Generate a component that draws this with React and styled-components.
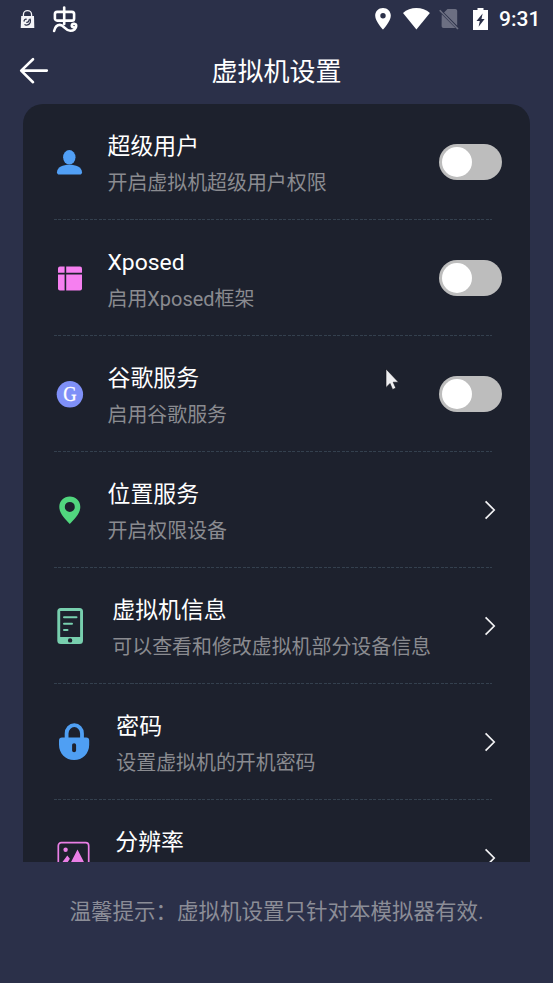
import React from 'react';
import styled, { createGlobalStyle } from 'styled-components';

const settings = [
  { icon: 'user', title: '超级用户', desc: '开启虚拟机超级用户权限', gap: 13.5, toggle: true },
  { icon: 'frame', title: 'Xposed', desc: '启用Xposed框架', gap: 13.5, toggle: true },
  { icon: 'google', title: '谷歌服务', desc: '启用谷歌服务', gap: 13.5, toggle: true },
  { icon: 'pin', title: '位置服务', desc: '开启权限设备', gap: 13.5 },
  { icon: 'phone', title: '虚拟机信息', desc: '可以查看和修改虚拟机部分设备信息', gap: 18.3 },
  { icon: 'lock', title: '密码', desc: '设置虚拟机的开机密码', gap: 22.3 },
  { icon: 'image', title: '分辨率', gap: 21.3 },
];

const icons = {
  user: (
    <g fill="#519ff5">
      <ellipse cx="15.3" cy="19.3" rx="6.2" ry="7.2" />
      <path d="M3 34.2c0-5 6-7.4 12.4-7.4S28 29.2 28 34.2c0 1.5-.9 2.3-2.300 2.300H5.300C3.900 36.500 3 35.700 3 34.200z" />
    </g>
  ),
  frame: (
    <g fill="#f67ff0">
      <path d="M6 12.600h4.600v6.200H4v-4.200a2 2 0 0 1 2-2z" />
      <path d="M12.200 12.600H26a2 2 0 0 1 2 2v4.200H12.200z" />
      <path d="M4 20.400h6.600v16H6a2 2 0 0 1-2-2z" />
      <path d="M12.200 20.400H28v14a2 2 0 0 1-2 2H12.200z" />
    </g>
  ),
  google: (
    <>
      <circle cx="15.900" cy="24.300" r="13.200" fill="#7f90f8" />
      <text transform="translate(15.900 31.300) scale(.88 1)" textAnchor="middle" fill="#fff" stroke="#fff" strokeWidth=".3">
        G
      </text>
    </>
  ),
  pin: (
    <path
      fill="#51d67e"
      fillRule="evenodd"
      d="M15.800 10.600c-5.900 0-10.500 4.600-10.500 10.300 0 7 6.800 13 10.500 17.100 3.700-4.100 10.500-10.100 10.500-17.100 0-5.700-4.600-10.300-10.500-10.300zm0 5.300a5 5 0 1 1 0 10 5 5 0 0 1 0-10z"
    />
  ),
  phone: (
    <>
      <path
        fill="#78cfae"
        fillRule="evenodd"
        d="M6.800 6h18.700a3.500 3.500 0 0 1 3.500 3.500v29a3.500 3.500 0 0 1-3.500 3.500H6.800a3.500 3.500 0 0 1-3.500-3.500v-29A3.500 3.500 0 0 1 6.800 6zm-.6 3v26h19.900V9zm9.900 27.200a2.200 2.200 0 1 0 0 4.400 2.200 2.200 0 0 0 0-4.400z"
      />
      <path stroke="#78cfae" strokeWidth="2" strokeLinecap="round" d="M10 15.300h12.500M10 21.700h8M10 28h3.500" />
    </>
  ),
  lock: (
    <>
      <path d="M12.600 21v-5.500a7.700 8.300 0 0 1 15.400 0V21" fill="none" stroke="#4f9ff3" strokeWidth="3.800" />
      <path
        fill="#4f9ff3"
        fillRule="evenodd"
        d="M8 19.500h24.200c2 0 3 1 3 3v4.200C35.200 35.500 28.600 42 20.100 42S5 35.500 5 26.700v-4.200c0-2 1-3 3-3zm12.100 5.700c-1.200 0-2 .8-2 2v5c0 1.200.8 2 2 2s2-.8 2-2v-5c0-1.200-.8-2-2-2z"
      />
    </>
  ),
  image: (
    <>
      <rect x="4.300" y="8.700" width="30.400" height="30.400" rx="3" fill="none" stroke="#ea7fe6" strokeWidth="1.700" />
      <circle cx="11.600" cy="15.700" r="2.200" fill="#ea7fe6" />
      <path d="M23.500 15.500 32 32H15z M13.300 21.500l2.600 3.200L10 34H7v-4z" fill="#ea7fe6" />
    </>
  ),
};

const StatusBar = () => (
  <StatusWrap>
    <StatusIcon $ml={20} width="15" height="20" viewBox="0 0 15 20">
      <path d="M3.400 8V5.700a4.100 4.100 0 0 1 8.200 0V8" fill="none" stroke="#f4f4f8" strokeWidth="1.300" />
      <path d="M1.200 7h12.800l.3 12H.7z" fill="#f4f4f8" />
      <path
        d="M4.200 12.600c-.6-1.600 1-2.800 2.500-2.200M9.800 9.600c1.600 2 .6 6.200-3 6.600-1.200.1-1.900-.4-2.100-1.100M6.300 13.400c1.500.2 2.700-1 3-3"
        fill="none"
        stroke="#2b3049"
        strokeWidth="1.200"
      />
    </StatusIcon>
    {/* emulator mark */}
    <StatusIcon $ml={16} width="28" height="28" viewBox="0 0 28 28">
      <g fill="none" stroke="#fff" strokeWidth="2.600" strokeLinecap="round" strokeLinejoin="round">
        <path d="M13.200 2.600v16.400" />
        <rect x="3.900" y="6.900" width="19.200" height="8.700" rx="2.200" />
        <path d="M3.100 26c.9-3.700 3-6.100 5.700-6.100 4.300 0 5.300 5.800 10.500 5.800 3.400 0 5.900-2 5.900-4.700 0-2.500-3.800-3-4.400-.8-.3 1.400.7 2.200 1.900 1.800" />
      </g>
    </StatusIcon>
    <Spacer />
    <StatusIcon width="16" height="22" viewBox="0 0 16 22">
      <path
        fill="#fff"
        fillRule="evenodd"
        d="M8 0C3.500 0 .2 3.300.2 7.700.2 13.200 8 21.600 8 21.600s7.800-8.400 7.800-13.900C15.800 3.300 12.500 0 8 0zm0 5a2.700 2.700 0 1 1 0 5.400A2.700 2.700 0 0 1 8 5z"
      />
    </StatusIcon>
    <StatusIcon $ml={12} width="27" height="22" viewBox="0 0 27 22">
      <path fill="#fff" d="M0 4.900C3.600 1.800 8.300.1 13.400.1s9.900 1.700 13.500 4.800L13.400 21.600z" />
    </StatusIcon>
    <StatusIcon $ml={9} width="20" height="22" viewBox="0 0 20 22">
      <path d="M8.500 1h7.700c1.200 0 2 .8 2 2v14.700L5 4.500zM2.700 6.200 16.400 20H4.600c-1.200 0-2-.8-2-2z" fill="#6c6f82" />
      <path d="M.7 2.300 19 21" stroke="#6c6f82" strokeWidth="1.600" />
    </StatusIcon>
    <StatusIcon $ml={14} width="15" height="22" viewBox="0 0 15 22">
      <path
        fill="#fff"
        fillRule="evenodd"
        d="M4.500 0h6v2H15v20H0V2h4.500zM9.600 5.400 3.500 13h3.300l-1.200 5.800 6-7.800H8.500z"
      />
    </StatusIcon>
    <Clock>9:31</Clock>
  </StatusWrap>
);

const SettingRow = ({ item }) => {
  const [on, setOn] = React.useState(false);
  return (
    <Row>
      <RowIcon width="40" height="48" viewBox="0 0 40 48">
        {icons[item.icon]}
      </RowIcon>
      <RowText $gap={item.gap}>
        <Title>{item.title}</Title>
        <Desc>{item.desc}</Desc>
      </RowText>
      {item.toggle ? (
        <Switch $on={on} onClick={() => setOn(!on)}>
          <Knob />
        </Switch>
      ) : (
        <Chevron width="12" height="20" viewBox="0 0 12 20">
          <path d="M1.600 1.300 10.200 10l-8.600 8.700" fill="none" stroke="#f2f2f4" strokeWidth="1.700" />
        </Chevron>
      )}
    </Row>
  );
};

const App = () => {
  return (
    <>
      <GlobalStyle />
      <Screen>
        <StatusBar />
        <Header>
          <BackButton>
            <svg width="30" height="28" viewBox="0 0 30 28">
              <path
                d="M14 2.200 2.200 13.600 14 25.200M2.500 13.600h25.300"
                fill="none"
                stroke="#fff"
                strokeWidth="2.600"
                strokeLinecap="round"
                strokeLinejoin="round"
              />
            </svg>
          </BackButton>
          <HeaderTitle>虚拟机设置</HeaderTitle>
        </Header>
        <Card>
          {settings.map((item) => (
            <SettingRow key={item.icon} item={item} />
          ))}
        </Card>
        <Tip>温馨提示：虚拟机设置只针对本模拟器有效.</Tip>
        <Cursor width="14" height="23" viewBox="0 0 14 23">
          <path
            d="M1 1v18.500l4-4 2.600 6 3.200-1.400L8.200 14.200h5.300z"
            fill="#eeeef0"
            stroke="#10131b"
            strokeWidth=".6"
          />
        </Cursor>
      </Screen>
    </>
  );
};

export default App;

const GlobalStyle = createGlobalStyle`
  * {
    box-sizing: border-box;
  }

  body {
    margin: 0;
    background: #2b3049;
    font-family: Roboto, 'Noto Sans CJK SC', sans-serif;
  }
`;

const Screen = styled.div`
  position: relative;
  display: flex;
  flex-direction: column;
  width: 553px;
  height: 983px;
  overflow: hidden;
  background: #2b3049;
`;

const StatusWrap = styled.div`
  display: flex;
  align-items: center;
  flex: none;
  height: 37px;
  padding-right: 14px;
`;

const StatusIcon = styled.svg`
  flex: none;
  margin-left: ${(props) => props.$ml || 0}px;
`;

const Spacer = styled.div`
  flex: 1;
`;

const Clock = styled.span`
  width: 40px;
  margin-left: 11px;
  padding-top: 1px;
  color: #fff;
  font-size: 21px;
  font-weight: 500;
  line-height: 24px;
  white-space: nowrap;
`;

const Header = styled.header`
  display: grid;
  grid-template-columns: 60px 1fr 60px;
  align-items: center;
  flex: none;
  height: 67px;
`;

const BackButton = styled.button`
  display: flex;
  padding: 0 0 0 19px;
  border: 0;
  background: none;
`;

const HeaderTitle = styled.h1`
  margin: 0;
  padding-top: 2px;
  color: #fff;
  font-size: 26px;
  font-weight: 400;
  line-height: 36px;
  text-align: center;
`;

const Card = styled.main`
  flex: none;
  height: 757.5px;
  margin: 0 23px;
  overflow: hidden;
  border-radius: 20px 20px 0 0;
  background: #1d212d;
`;

const Row = styled.div`
  display: flex;
  align-items: center;
  height: 116px;
  padding: 0 28px 0 31px;
  background: repeating-linear-gradient(90deg, #34404e 0 3px, transparent 3px 4.5px) 31px 115px / 438px 1px no-repeat;
`;

const RowIcon = styled.svg`
  flex: none;

  text {
    font-family: 'Liberation Serif', serif;
    font-size: 21px;
    font-weight: 400;
  }
`;

const RowText = styled.div`
  flex: 1;
  margin-left: ${(props) => props.$gap}px;
  padding-top: 7px;
  white-space: nowrap;
`;

const Title = styled.div`
  color: #fff;
  font-size: 22.9px;
  line-height: 37px;
`;

const Desc = styled.div`
  height: 38px;
  color: #8a8b90;
  font-size: 19.93px;
  line-height: 38px;
`;

const Switch = styled.button`
  display: flex;
  align-items: center;
  justify-content: ${(props) => (props.$on ? 'flex-end' : 'flex-start')};
  width: 63px;
  height: 36px;
  padding: 0 3px;
  border: 0;
  border-radius: 18px;
  background: ${(props) => (props.$on ? '#519ff5' : '#bdbdbd')};
`;

const Knob = styled.span`
  width: 30px;
  height: 30px;
  border-radius: 50%;
  background: #fff;
`;

const Chevron = styled.svg`
  flex: none;
  margin-right: 6px;
`;

const Tip = styled.p`
  margin: 32px 0 0;
  color: #8b8d97;
  font-size: 21.5px;
  line-height: 36px;
  text-align: center;
`;

/* mouse pointer floating over the list */
const Cursor = styled.svg`
  position: absolute;
  left: 385px;
  top: 368px;
  pointer-events: none;
`;
